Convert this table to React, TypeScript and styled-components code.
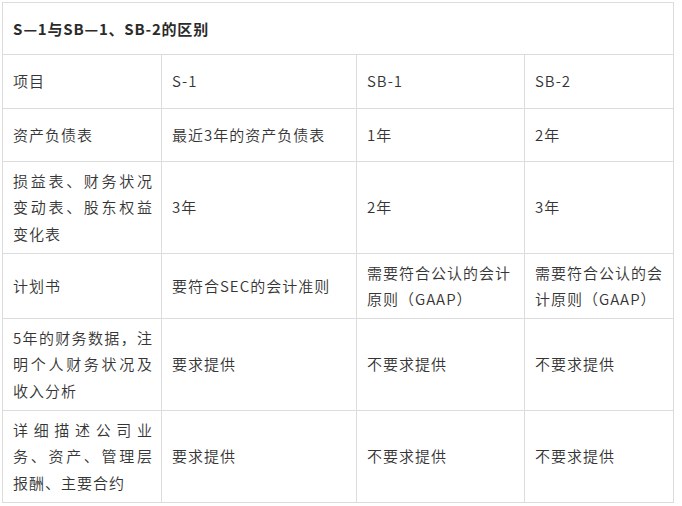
import React from "react";
import styled, { createGlobalStyle } from "styled-components";

const GlobalStyle = createGlobalStyle`
  html, body { margin: 0; padding: 0; background: #ffffff; }
  body {
    font-family: "Noto Sans CJK SC", "Noto Sans", sans-serif;
    color: #333333;
  }
`;

const Page = styled.div`
  padding: 2px 0 0 2px;
  width: 682px;
  height: 506px;
  box-sizing: border-box;
`;

const Grid = styled.div`
  display: grid;
  width: 672px;
  box-sizing: border-box;
  grid-template-columns: 158px 194px 167px 148px;
  grid-template-rows: 51px 53px 52px 91px 64px 91px 91px;
  gap: 1px;
  padding: 1px;
  background: #dcdcdc;
`;

const Cell = styled.div<{ $justify?: boolean }>`
  background: #ffffff;
  display: flex;
  align-items: center;
  padding: 0 8px 0 10px;
  font-size: 15px;
  font-weight: 350;
  line-height: 26.5px;
  letter-spacing: 1px;
  color: #353535;
  & > span {
    display: block;
    width: 100%;
    text-align: ${(p) => (p.$justify ? "justify" : "left")};
  }
`;

const TitleCell = styled(Cell)`
  grid-column: 1 / -1;
  font-weight: 700;
  letter-spacing: 0.8px;
  color: #2b2b2b;
  padding-top: 2px;
`;

type Row = { label: string; cells: string[] };

const rows: Row[] = [
  { label: "项目", cells: ["S-1", "SB-1", "SB-2"] },
  { label: "资产负债表", cells: ["最近3年的资产负债表", "1年", "2年"] },
  {
    label: "损益表、财务状况变动表、股东权益变化表",
    cells: ["3年", "2年", "3年"],
  },
  {
    label: "计划书",
    cells: ["要符合SEC的会计准则", "需要符合公认的会计原则（GAAP）", "需要符合公认的会计原则（GAAP）"],
  },
  {
    label: "5年的财务数据，注明个人财务状况及收入分析",
    cells: ["要求提供", "不要求提供", "不要求提供"],
  },
  {
    label: "详细描述公司业务、资产、管理层报酬、主要合约",
    cells: ["要求提供", "不要求提供", "不要求提供"],
  },
];

export default function App() {
  return (
    <Page>
      <GlobalStyle />
      <Grid>
        <TitleCell>
          <span>S—1与SB—1、SB-2的区别</span>
        </TitleCell>
        {rows.map((r) => (
          <React.Fragment key={r.label}>
            <Cell $justify>
              <span>{r.label}</span>
            </Cell>
            {r.cells.map((c, i) => (
              <Cell key={i}>
                <span>{c}</span>
              </Cell>
            ))}
          </React.Fragment>
        ))}
      </Grid>
    </Page>
  );
}
